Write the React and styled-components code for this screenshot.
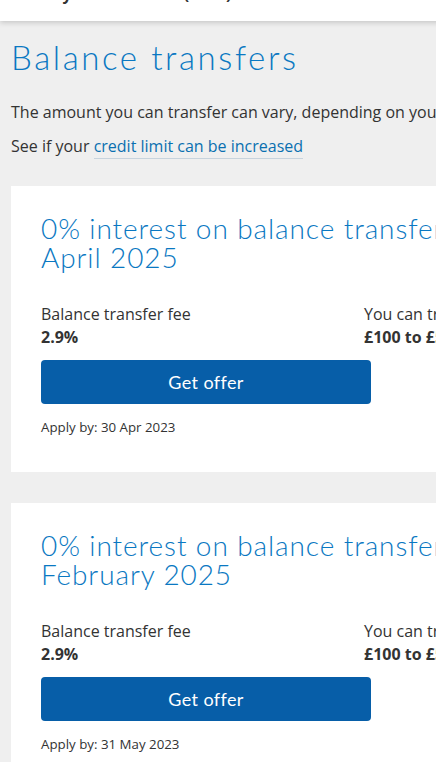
import React from 'react'
import styled, { createGlobalStyle } from 'styled-components'

const Global = createGlobalStyle`
  html, body {
    margin: 0;
    padding: 0;
    overflow: hidden;
    background: #efefef;
  }
  body {
    font-family: 'Open Sans', 'Liberation Sans', sans-serif;
    color: #333;
  }
`

const Page = styled.div`
  width: 760px;
  background: #efefef;
`

const Header = styled.header`
  height: 21px;
  overflow: hidden;
  background: #fff;
  box-shadow: 0 2px 5px rgba(0, 0, 0, 0.16);
  position: relative;
  z-index: 1;
`

const Account = styled.div`
  margin: -16px 0 0 12px;
  font-size: 16px;
  font-weight: 700;
  line-height: 20px;
  color: #333;
`

const Main = styled.main`
  padding: 0 0 0 11px;
`

const Heading = styled.h1`
  margin: 0;
  padding-top: 16px;
  font-family: Lato, 'Open Sans', sans-serif;
  font-weight: 300;
  font-size: 33px;
  letter-spacing: 2.6px;
  line-height: 40px;
  color: #0a78c2;
`

const Para = styled.p`
  margin: ${({ top }) => top || 0}px 0 0;
  font-size: 16px;
  line-height: 22px;
  color: #333;
  white-space: nowrap;
`

const Link = styled.a`
  color: #0a6fb0;
  text-decoration: none;
  border-bottom: 1px solid #c7d3dd;
  padding-bottom: 1px;
`

const Offers = styled.div`
  display: flex;
  flex-direction: column;
  gap: 31px;
  margin-top: 29px;
`

const Card = styled.section`
  background: #fff;
  padding: 28px 30px 0;
  height: 286px;
  box-sizing: border-box;
`

const Title = styled.h2`
  margin: 0;
  font-family: Lato, 'Open Sans', sans-serif;
  font-weight: 300;
  font-size: 28px;
  letter-spacing: 0.9px;
  line-height: 29px;
  color: #0a78c2;
  width: 680px;
`

const Details = styled.div`
  display: grid;
  grid-template-columns: 323px 1fr;
  margin-top: 31px;
`

const Label = styled.div`
  font-size: 16px;
  line-height: 22px;
  white-space: nowrap;
`

const Value = styled.div`
  font-size: 16px;
  line-height: 25px;
  font-weight: 700;
  white-space: nowrap;
`

const Button = styled.button`
  display: block;
  width: 330px;
  height: 44px;
  margin-top: 10px;
  border: 0;
  border-radius: 4px;
  background: #075ea8;
  color: #fff;
  font-family: Lato, 'Open Sans', sans-serif;
  font-weight: 400;
  font-size: 18px;
  letter-spacing: 0.4px;
`

const Apply = styled.div`
  margin-top: 14px;
  font-size: 13.3px;
  line-height: 18px;
  color: #333;
`

const offers = [
  { until: 'April 2025', apply: '30 Apr 2023' },
  { until: 'February 2025', apply: '31 May 2023' }
]

export default function App() {
  return (
    <Page>
      <Global />
      <Header>
        <Account>Barclaycard Rewards (4001)</Account>
      </Header>
      <Main>
        <Heading>Balance transfers</Heading>
        <Para top={24}>
          The amount you can transfer can vary, depending on your credit limit and available balance.
        </Para>
        <Para top={12}>
          See if your <Link href="#">credit limit can be increased</Link>
        </Para>
        <Offers>
          {offers.map(o => (
            <Card key={o.apply}>
              <Title>
                0% interest on balance transfers until
                <br />
                {o.until}
              </Title>
              <Details>
                <div>
                  <Label>Balance transfer fee</Label>
                  <Value>2.9%</Value>
                </div>
                <div>
                  <Label>You can transfer</Label>
                  <Value>£100 to £5,000</Value>
                </div>
              </Details>
              <Button>Get offer</Button>
              <Apply>Apply by: {o.apply}</Apply>
            </Card>
          ))}
        </Offers>
      </Main>
    </Page>
  )
}
